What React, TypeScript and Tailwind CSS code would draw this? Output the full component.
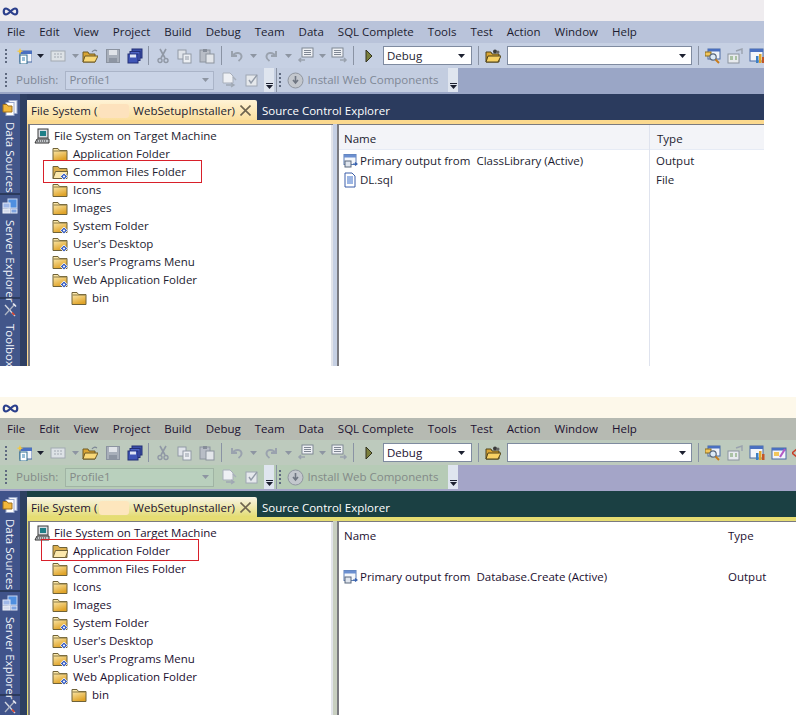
import React from "react";

type Theme = {
  title: string; menu: string; bar1: string; bar2: string; band: string; dark: string; tab: string;
  strip: string; side: string; sideEdge: string; ink: string; dim: string; combo: string; head: string; mask: string; gutter: string;
};

const blue: Theme = {
  title: "bg-[#efecef]", menu: "bg-[#b9c3da]", bar1: "bg-[#c6d0e3]", bar2: "bg-[#c3cde0]", band: "bg-[#9aa6c6]",
  dark: "bg-[#2b3b5e]", tab: "bg-gradient-to-b from-[#fff3d6] to-[#fbdf9e]", strip: "bg-[#fbd98f]",
  side: "bg-[#42568a]", sideEdge: "bg-[#2e3f62]", ink: "text-[#1c1c30]", dim: "text-[#7f8896]",
  combo: "bg-[#c9d3e6] border-[#aab4c8]", head: "bg-[#f3f4f8]", mask: "bg-[#fde2bd]", gutter: "bg-[#c6d0e3]",
};
const green: Theme = {
  title: "bg-[#fdf8ea]", menu: "bg-[#b6bab2]", bar1: "bg-[#bdcabd]", bar2: "bg-[#b6cbb6]", band: "bg-[#a4a5c8]",
  dark: "bg-[#1b4043]", tab: "bg-gradient-to-b from-[#f8f3e4] to-[#e4dc70]", strip: "bg-[#e6dd72]",
  side: "bg-[#40538a]", sideEdge: "bg-[#2d4060]", ink: "text-[#1c1030]", dim: "text-[#838a88]",
  combo: "bg-[#b9d0bd] border-[#a0b4a4]", head: "bg-white", mask: "bg-[#fde6bd]", gutter: "bg-[#c8cfc0]",
};

const S = ({ children, w = 16, h = 16 }: { children: React.ReactNode; w?: number; h?: number }) => (
  <svg width={w} height={h} viewBox={`0 0 ${w} ${h}`} className="shrink-0 block">{children}</svg>
);

const Infinity8 = () => (
  <svg width="17" height="9" viewBox="0 0 17 9" className="block">
    <path d="M4 1.5C1 1.5 1 7.5 4 7.5 6.5 7.5 10.5 1.5 13 1.5 16 1.5 16 7.5 13 7.5 10.5 7.5 6.5 1.5 4 1.5Z" fill="none" stroke="#2b3f8c" strokeWidth="2.2" />
  </svg>
);

const Folder = ({ open, link }: { open?: boolean; link?: boolean }) => (
  <S>
    <defs>
      <linearGradient id="fold" x1="0" y1="0" x2="0.4" y2="1">
        <stop offset="0" stopColor="#fff3c0" />
        <stop offset="1" stopColor="#e0a42a" />
      </linearGradient>
    </defs>
    <path d="M1 2.5h5l1.5 2H15v10H1Z" fill={open ? "#dcae4c" : "url(#fold)"} stroke="#6f6238" strokeWidth="1" />
    {!open && <path d="M1.5 5h13" stroke="#8a7a48" strokeWidth="1" />}
    {open && <path d="M3.5 7.5H16L13.5 14.5H1Z" fill="#fbe8ac" stroke="#6f6238" strokeWidth="1" />}
    {link && (
      <g>
        <path d="M12 9l3.6 3.4L12 16l-3.6-3.6Z" fill="#3f63c4" stroke="#fff" strokeWidth="0.8" />
        <circle cx="12" cy="12.5" r="1" fill="#fff" />
      </g>
    )}
  </S>
);

const Computer = () => (
  <S>
    <rect x="4" y="1" width="10" height="9" fill="#d9dde2" stroke="#3a3a3a" />
    <rect x="6" y="3" width="6" height="5" fill="#1f7f87" />
    <path d="M1 15l2-4h12v4Z" fill="#c4c8cc" stroke="#333" />
    <path d="M3 13h10" stroke="#333" strokeWidth="1" strokeDasharray="1 1" />
  </S>
);

const Project = () => (
  <S>
    <rect x="2" y="1.5" width="12" height="10" fill="#f4f7fb" stroke="#5d7fb5" />
    <rect x="2" y="1.5" width="12" height="3" fill="#6b8fd0" />
    <rect x="3" y="8" width="6" height="6" fill="#dfe5ee" stroke="#59677c" />
    <path d="M11 11h4M13 9.5l2 1.5-2 1.5" fill="none" stroke="#3963b0" strokeWidth="1.2" />
  </S>
);

const Doc = () => (
  <S>
    <path d="M3 1h7l3 3v11H3Z" fill="#fff" stroke="#3a5da8" />
    <path d="M5 5h6M5 7h6M5 9h6M5 11h6" stroke="#3a6cc8" />
  </S>
);

const DataIco = () => (
  <S>
    <rect x="7" y="0.5" width="8" height="13" fill="#f4f6fb" stroke="#9aa8cc" />
    <rect x="4" y="2.5" width="8" height="13" fill="#fff" stroke="#9aa8cc" />
    <path d="M1 4.5h4l1 1.5h4v6H1Z" fill="#f2b83c" stroke="#a0701c" />
  </S>
);
const ServerIco = () => (
  <S>
    <rect x="6" y="1" width="9" height="9" fill="#4f8fe0" stroke="#c8d6f0" />
    <rect x="1" y="5" width="7" height="5" fill="#9fb8e8" stroke="#dfe6f5" />
    <rect x="1" y="11" width="7" height="4" fill="#d5dced" stroke="#eef1f8" />
    <rect x="9" y="11" width="6" height="4" fill="#7ea3e0" stroke="#dfe6f5" />
  </S>
);
const ToolsIco = () => (
  <S>
    <path d="M3 3l10 11" stroke="#d5d9e2" strokeWidth="1.3" />
    <path d="M13 2L3 13" stroke="#aeb5c4" strokeWidth="1.3" />
    <path d="M10 10.5l2.5 2.5" stroke="#d8402a" strokeWidth="1.6" />
    <path d="M11 1.5l3 3" stroke="#e8ebf2" strokeWidth="1.6" />
  </S>
);

const New = () => (
  <S>
    <rect x="4" y="3" width="12" height="11" fill="#f3f6fb" stroke="#4a6aa5" />
    <rect x="4" y="3" width="12" height="3" fill="#4a70c0" />
    <rect x="4" y="7" width="7" height="9" fill="#fff" stroke="#2f6d8e" />
    <path d="M6 10h3M6 12h3" stroke="#2f7fb0" />
    <path d="M4 0l1 2.5L7.5 3 5 4 4 6.5 3 4 .5 3 3 2.5Z" fill="#f6c93c" />
  </S>
);
const GridIco = () => (
  <S>
    <rect x="1" y="3" width="14" height="10" fill="#dde2e6" stroke="#a2a9b2" />
    <path d="M4 6h2M7 6h2M10 6h2M4 9h2M7 9h2M10 9h2" stroke="#a2a9b2" />
  </S>
);
const OpenFolder = () => (
  <S>
    <path d="M1 4h5l1 2h6v8H1Z" fill="#d9a433" stroke="#6f5a24" />
    <path d="M3 8h13l-3 6H1Z" fill="#f9d877" stroke="#6f5a24" />
    <path d="M10 4q2-3 5-1" fill="none" stroke="#7d8796" strokeWidth="1.2" />
  </S>
);
const Floppy = () => (
  <S>
    <rect x="1.5" y="1.5" width="13" height="13" fill="#a8afba" stroke="#8b93a0" />
    <rect x="4" y="2" width="8" height="5" fill="#e0e3e8" />
    <rect x="4" y="10" width="8" height="4" fill="#8d95a2" />
  </S>
);
const FloppyAll = () => (
  <S>
    <rect x="5" y="1" width="10" height="9" fill="#3a4ea8" stroke="#232f76" />
    <rect x="3" y="3.5" width="10" height="9" fill="#4d63c4" stroke="#232f76" />
    <rect x="1" y="6" width="10" height="9" fill="#3f55b6" stroke="#232f76" />
    <rect x="3" y="6.5" width="6" height="3" fill="#dfe5f5" />
  </S>
);
const Cut = () => (
  <S w={12}>
    <path d="M3 1l5 9M9 1L4 10" stroke="#9098a5" strokeWidth="1.6" fill="none" />
    <circle cx="3" cy="12.5" r="2" fill="none" stroke="#9098a5" strokeWidth="1.4" />
    <circle cx="9" cy="12.5" r="2" fill="none" stroke="#9098a5" strokeWidth="1.4" />
  </S>
);
const Copy = () => (
  <S>
    <rect x="1" y="2" width="8" height="9" fill="#dfe3e9" stroke="#929aa6" />
    <rect x="6" y="6" width="8" height="9" fill="#eceff3" stroke="#929aa6" />
    <path d="M8 9h4M8 11h4" stroke="#929aa6" />
  </S>
);
const Paste = () => (
  <S>
    <rect x="1" y="2" width="10" height="12" fill="#b8bdc6" stroke="#8c939e" />
    <rect x="4" y="1" width="4" height="3" fill="#868d99" />
    <rect x="7" y="6" width="8" height="9" fill="#e3e6ea" stroke="#8c939e" />
  </S>
);
const Undo = ({ flip }: { flip?: boolean }) => (
  <svg width="13" height="16" viewBox="0 0 13 16" className={flip ? "shrink-0 block -scale-x-100" : "shrink-0 block"}>
    <path d="M2 3v5h5M2.5 8C5 3.5 12 4 11.5 9c-.2 2-1.5 3-3 4" fill="none" stroke="#9aa2ae" strokeWidth="2" />
  </svg>
);
const Comment = ({ flip }: { flip?: boolean }) => (
  <svg width="17" height="17" viewBox="0 0 17 17" className="shrink-0 block">
    <rect x={flip ? 1 : 5} y="1" width="11" height="9" fill="#eef0f4" stroke="#7f8794" />
    <path d={flip ? "M3 3.5h7M3 5.5h7M3 7.5h7" : "M7 3.5h7M7 5.5h7M7 7.5h7"} stroke="#7f8794" />
    <path d={flip ? "M9 13h6M13 11l2 2-2 2" : "M2 13h6M4 11l-2 2 2 2"} fill="none" stroke="#9aa2ae" strokeWidth="1.5" />
  </svg>
);
const Play = () => (
  <S w={8}>
    <path d="M1 2l6 6-6 6Z" fill="#7a7f3c" stroke="#33331f" />
  </S>
);
const Finder = () => (
  <S>
    <path d="M1 4h5l1 2h7v8H1Z" fill="#d9a433" stroke="#4f4218" />
    <path d="M3 8h13l-3 6H1Z" fill="#f7d164" stroke="#4f4218" />
    <circle cx="10" cy="3.5" r="2" fill="#3a3a3a" />
    <circle cx="13" cy="4" r="1.5" fill="#666" />
  </S>
);
const Search = () => (
  <S>
    <rect x="3" y="1" width="12" height="10" fill="#eef2f9" stroke="#4a6aa5" />
    <rect x="3" y="1" width="12" height="2.5" fill="#4a70c0" />
    <rect x="0" y="4" width="6" height="4" fill="#f2c65c" stroke="#8a6c20" />
    <circle cx="8" cy="9" r="3.2" fill="#dceaf8" stroke="#59677c" strokeWidth="1.2" />
    <path d="M10.5 11.5L14 15" stroke="#c97c1c" strokeWidth="2" />
  </S>
);
const Props = () => (
  <S>
    <rect x="1" y="6" width="11" height="9" fill="#e7eaee" stroke="#8c949f" />
    <path d="M3 9h3M3 11h3M8 9h2M8 11h2" stroke="#6f9a5c" />
    <path d="M9 3l6-2v5" fill="none" stroke="#9aa2ae" strokeWidth="1.4" />
  </S>
);
const ChartWin = () => (
  <S>
    <rect x="1" y="1" width="13" height="12" fill="#f2f5fb" stroke="#4a6aa5" />
    <rect x="1" y="1" width="13" height="3" fill="#4a70c0" />
    <rect x="7" y="8" width="2.5" height="7" fill="#3a7fc4" />
    <rect x="10" y="6" width="2.5" height="9" fill="#e0a52c" />
    <rect x="13" y="9" width="2.5" height="6" fill="#c2562a" />
  </S>
);
const Wizard = () => (
  <S>
    <rect x="1" y="3" width="14" height="11" fill="#f3f6fb" stroke="#4a6aa5" />
    <rect x="1" y="3" width="14" height="2.5" fill="#4a70c0" />
    <rect x="3" y="7" width="5" height="4" fill="#f2c65c" />
    <path d="M9 12l5-8" stroke="#b25ac4" strokeWidth="2" />
  </S>
);
const Redx = () => (
  <S w={6}>
    <path d="M5 4L0 8M5 12L0 8" stroke="#c8402a" strokeWidth="1.6" fill="none" />
  </S>
);
const Install = () => (
  <S w={17} h={17}>
    <circle cx="8.5" cy="8.5" r="7.5" fill="#c3c7cd" stroke="#9096a0" />
    <path d="M8.5 4v6M6 8l2.5 3L11 8" fill="none" stroke="#6f7682" strokeWidth="1.6" />
  </S>
);
const Publish1 = () => (
  <S>
    <path d="M2 1h7l3 3v7H2Z" fill="#eef0f4" stroke="#a8afba" />
    <path d="M5 13h7M10 11l3 2-3 2" fill="none" stroke="#a0a8b4" strokeWidth="1.4" />
    <path d="M12 5l3 3" stroke="#a8afba" strokeWidth="1.4" />
  </S>
);
const Check = () => (
  <S w={15}>
    <rect x="1" y="3" width="11" height="11" fill="#e5e8ec" stroke="#a0a8b4" />
    <path d="M4 8l2 3 6-8" fill="none" stroke="#939ba8" strokeWidth="1.4" />
  </S>
);
const CloseX = () => (
  <svg width="11" height="11" viewBox="0 0 11 11" className="block">
    <path d="M0.5 0.5l10 10M10.5 0.5l-10 10" stroke="#6e6450" strokeWidth="1.6" />
  </svg>
);
const Arrow = ({ dark }: { dark?: boolean }) => (
  <svg width="7" height="4" viewBox="0 0 7 4" className="shrink-0 block">
    <path d="M0 0h7L3.5 4Z" fill={dark ? "#1c2030" : "#8d95a2"} />
  </svg>
);
const Handle = () => (
  <div className="flex flex-col gap-[2px] w-[2px] shrink-0">
    {[0, 1, 2, 3].map((i) => <div key={i} className="w-[2px] h-[2px] bg-[#5f6a80]" />)}
  </div>
);
const Sep = () => <div className="w-px h-[19px] bg-[#8a93a4] shrink-0" />;
const Chevron = () => (
  <div className="flex flex-col items-center gap-[1px] w-[10px] h-[24px] justify-end pb-[3px] bg-[#dfe5ef] shrink-0">
    <div className="w-[7px] h-px bg-[#1c2030]" />
    <Arrow dark />
  </div>
);

const MENU = ["File", "Edit", "View", "Project", "Build", "Debug", "Team", "Data", "SQL Complete", "Tools", "Test", "Action", "Window", "Help"];
const TREE: { label: string; link?: boolean }[] = [
  { label: "Icons" },
  { label: "Images" },
  { label: "System Folder", link: true },
  { label: "User's Desktop", link: true },
  { label: "User's Programs Menu", link: true },
  { label: "Web Application Folder", link: true },
];

const Row = ({ icon, label }: { icon: React.ReactNode; label: string }) => (
  <div className="flex items-center h-[18px] pl-[22px] gap-[5px] whitespace-nowrap">
    {icon}
    <span>{label}</span>
  </div>
);

const SideItem = ({ icon, label, size }: { icon: React.ReactNode; label?: string; size: string }) => (
  <div className={`flex flex-col items-center shrink-0 ${size}`}>
    {icon}
    {label && (
      <span className="[writing-mode:vertical-rl] text-[#f2f4fa] whitespace-nowrap mt-[6px] leading-[18px]">{label}</span>
    )}
  </div>
);

const Side = ({ t, second }: { t: Theme; second?: boolean }) => (
  <div className={`w-[27px] shrink-0 flex overflow-hidden ${t.side}`}>
    <div className="w-[20px] shrink-0 flex flex-col pt-[6px]">
      <SideItem icon={<DataIco />} label="Data Sources" size="h-[95px] border-b-2 border-[#2b3a5c]" />
      <SideItem icon={<ServerIco />} label="Server Explorer" size="h-[104px] pt-[3px] border-b-2 border-[#2b3a5c]" />
      <SideItem icon={<ToolsIco />} label={second ? undefined : "Toolbox"} size="pt-[3px]" />
    </div>
    <div className={`w-[7px] ${t.sideEdge}`} />
  </div>
);

function Shot({ t, width, height, second }: { t: Theme; width: string; height: string; second?: boolean }) {
  return (
    <div className={`${width} ${height} shrink-0 flex flex-col overflow-hidden`}>
      <div className={`h-[21px] shrink-0 flex items-center pl-[2px] pt-[2px] ${t.title}`}>
        <Infinity8 />
      </div>
      <div className={`h-[22px] shrink-0 flex items-center pl-[7px] gap-[14px] ${t.menu} ${t.ink}`}>
        {MENU.map((m) => <span key={m} className="whitespace-nowrap">{m}</span>)}
      </div>
      <div className={`h-[25px] shrink-0 flex items-center pl-[5px] overflow-hidden ${t.bar1}`}>
        <Handle />
        <div className="ml-[9px]"><New /></div>
        <div className="ml-[5px]"><Arrow dark /></div>
        <div className="ml-[6px]"><GridIco /></div>
        <div className="ml-[6px]"><Arrow /></div>
        <div className="ml-[3px]"><OpenFolder /></div>
        <div className="ml-[7px]"><Floppy /></div>
        <div className="ml-[6px]"><FloppyAll /></div>
        <div className="ml-[5px]"><Sep /></div>
        <div className="ml-[8px]"><Cut /></div>
        <div className="ml-[8px]"><Copy /></div>
        <div className="ml-[6px]"><Paste /></div>
        <div className="ml-[6px]"><Sep /></div>
        <div className="ml-[8px]"><Undo /></div>
        <div className="ml-[7px]"><Arrow /></div>
        <div className="ml-[8px]"><Undo flip /></div>
        <div className="ml-[7px]"><Arrow /></div>
        <div className="ml-[5px]"><Comment /></div>
        <div className="ml-[5px]"><Arrow /></div>
        <div className="ml-[5px]"><Comment flip /></div>
        <div className="ml-[5px]"><Sep /></div>
        <div className="ml-[11px]"><Play /></div>
        <div className={`ml-[10px] w-[89px] h-[19px] shrink-0 flex items-center justify-between pl-[3px] pr-[6px] bg-white border border-[#7f8ba0] ${t.ink}`}>
          <span>Debug</span><Arrow dark />
        </div>
        <div className="ml-[6px]"><Sep /></div>
        <div className="ml-[6px]"><Finder /></div>
        <div className="ml-[6px] w-[185px] h-[19px] shrink-0 flex items-center justify-end pr-[5px] bg-white border border-[#7f8ba0]"><Arrow dark /></div>
        <div className="ml-[6px]"><Sep /></div>
        <div className="ml-[6px]"><Search /></div>
        <div className="ml-[6px]"><Props /></div>
        <div className="ml-[6px]"><ChartWin /></div>
        <div className="ml-[6px]"><Wizard /></div>
        <div className="ml-[5px]"><Redx /></div>
      </div>
      <div className={`h-[26px] shrink-0 flex ${t.band}`}>
        <div className={`w-[458px] h-[24px] flex items-center pl-[5px] ${t.bar2} ${t.dim}`}>
          <Handle />
          <span className="ml-[9px]">Publish:</span>
          <div className={`ml-[7px] w-[149px] h-[19px] shrink-0 flex items-center justify-between pl-[3px] pr-[4px] border ${t.combo}`}>
            <span>Profile1</span><Arrow />
          </div>
          <div className="ml-[7px]"><Publish1 /></div>
          <div className="ml-[8px]"><Check /></div>
          <div className="ml-[4px]"><Chevron /></div>
          <div className="ml-[2px] w-px h-[24px] bg-[#8a93a4]" />
          <div className="ml-[2px]"><Handle /></div>
          <div className="ml-[6px]"><Install /></div>
          <span className="ml-[3px] whitespace-nowrap">Install Web Components</span>
          <div className="ml-auto"><Chevron /></div>
        </div>
      </div>
      <div className="flex-1 flex min-h-0">
        <Side t={t} second={second} />
        <div className="flex-1 flex flex-col min-w-0">
          <div className={`h-[26px] shrink-0 flex items-end ${t.dark}`}>
            <div className={`relative w-[230px] h-[20px] shrink-0 flex items-center pl-[4px] pt-[2px] rounded-tr-[2px] ${t.tab} ${t.ink}`}>
              <span className="whitespace-nowrap">File System (</span>
              <div className={`w-[30px] h-[14px] ml-[2px] shrink-0 rounded-[3px] ${t.mask}`} />
              <span className="ml-[4px] whitespace-nowrap">WebSetupInstaller)</span>
              <div className="absolute right-[6px] top-[5px]"><CloseX /></div>
            </div>
            <span className="ml-[5px] text-white h-[20px] pt-px leading-[20px] whitespace-nowrap">Source Control Explorer</span>
          </div>
          <div className={`h-[4px] shrink-0 ${t.strip}`} />
          <div className={`flex-1 flex min-h-0 pl-px ${t.strip}`}>
            <div className={`w-[305px] shrink-0 flex bg-white border-t border-l-2 border-t-[#7a7a80] border-l-[#7a7a80] ${t.ink}`}>
              <div className="relative flex-1 pt-[2px]">
                <div className="flex items-center h-[18px] pl-[4px] gap-[4px] whitespace-nowrap">
                  <Computer /><span>File System on Target Machine</span>
                </div>
                <Row icon={<Folder open={second} />} label="Application Folder" />
                <Row icon={<Folder open={!second} link={!second} />} label="Common Files Folder" />
                {TREE.map((r) => (
                  <Row key={r.label} icon={<Folder link={r.link} />} label={r.label} />
                ))}
                <div className="flex items-center h-[18px] pl-[41px] gap-[5px]">
                  <Folder /><span>bin</span>
                </div>
                {second ? (
                  <div className="absolute left-[11px] top-[17px] w-[158px] h-[22px] border border-[#d8202a]" />
                ) : (
                  <div className="absolute left-[13px] top-[35px] w-[159px] h-[23px] border border-[#d8202a]" />
                )}
              </div>
              <div className="w-[2px] bg-[#e2e4ea]" />
            </div>
            <div className={`w-[4px] shrink-0 ${t.gutter}`} />
            <div className={`flex-1 bg-white border-t border-l-2 border-t-[#7a7a80] border-l-[#7a7a80] ${t.ink}`}>
              {second ? (
                <>
                  <div className="flex items-center h-[25px] pt-[2px] pl-[5px]">
                    <span className="w-[384px]">Name</span><span>Type</span>
                  </div>
                  <div className="flex items-center h-[18px] mt-[21px] pl-[3px] whitespace-nowrap">
                    <Project />
                    <span className="ml-[2px] w-[368px] flex">Primary output from<span className="ml-[6px]">Database.Create (Active)</span></span>
                    <span>Output</span>
                  </div>
                </>
              ) : (
                <div className="relative h-full">
                  <div className={`flex items-center h-[25px] pt-[3px] pl-[5px] border-b border-[#e6ebf5] ${t.head}`}>
                    <span className="w-[313px]">Name</span><span>Type</span>
                  </div>
                  <div className="flex items-center h-[19px] mt-px pl-[3px] whitespace-nowrap">
                    <Project />
                    <span className="ml-[2px] w-[296px] flex">Primary output from<span className="ml-[6px]">ClassLibrary (Active)</span></span>
                    <span>Output</span>
                  </div>
                  <div className="flex items-center h-[19px] pl-[3px]">
                    <Doc />
                    <span className="ml-[2px] w-[296px]">DL.sql</span>
                    <span>File</span>
                  </div>
                  <div className="absolute left-[310px] top-0 h-full w-px bg-[#dfe3ee]" />
                </div>
              )}
            </div>
          </div>
        </div>
      </div>
    </div>
  );
}

export default function App() {
  return (
    <div className="w-[796px] h-[715px] overflow-hidden bg-white flex flex-col font-['Open_Sans',sans-serif] text-[11.5px] leading-[16px]">
      <Shot t={blue} width="w-[764px]" height="h-[366px]" />
      <div className="h-[31px] shrink-0" />
      <Shot t={green} width="w-[796px]" height="h-[318px]" second />
    </div>
  );
}
